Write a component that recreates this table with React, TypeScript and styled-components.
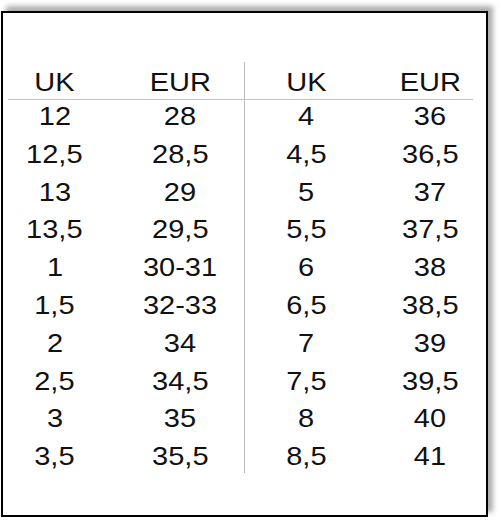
import React from "react";
import styled, { createGlobalStyle } from "styled-components";

const Global = createGlobalStyle`
  html, body { margin: 0; padding: 0; background: #ffffff; }
  body { font-family: "Liberation Sans", Arial, sans-serif; }
`;

const Card = styled.div`
  box-sizing: border-box;
  margin: 11px 0 0 1px;
  width: 487px;
  height: 506px;
  background: #ffffff;
  border: 2px solid #000000;
  box-shadow: 5px -5px 5px rgba(0, 0, 0, 0.32);
  padding: 49px 13px 0 5px;
`;

const Table = styled.div`
  display: flex;
  width: 465px;
  color: #111111;
  font-size: 25px;
`;

const Half = styled.div<{ $cols: string; $divider?: boolean }>`
  display: grid;
  grid-template-columns: ${(p) => p.$cols};
  border-left: ${(p) => (p.$divider ? "1px solid #bdbdbd" : "none")};
`;

const HeadCell = styled.div<{ $pad: number }>`
  line-height: 33px;
  padding-top: 4px;
  padding-left: ${(p) => p.$pad}px;
  text-align: center;
  border-bottom: 1px solid #c4c4c4;
`;

const Cell = styled.div<{ $pad: number; $last?: boolean }>`
  line-height: 33px;
  padding-left: ${(p) => p.$pad}px;
  padding-bottom: ${(p) => (p.$last ? 0 : 4.8)}px;
  text-align: center;
`;

const Text = styled.span`
  display: inline-block;
  transform: scaleX(1.16);
`;

const left: [string, string][] = [
  ["12", "28"],
  ["12,5", "28,5"],
  ["13", "29"],
  ["13,5", "29,5"],
  ["1", "30-31"],
  ["1,5", "32-33"],
  ["2", "34"],
  ["2,5", "34,5"],
  ["3", "35"],
  ["3,5", "35,5"],
];

const right: [string, string][] = [
  ["4", "36"],
  ["4,5", "36,5"],
  ["5", "37"],
  ["5,5", "37,5"],
  ["6", "38"],
  ["6,5", "38,5"],
  ["7", "39"],
  ["7,5", "39,5"],
  ["8", "40"],
  ["8,5", "41"],
];

function SizeHalf({
  rows,
  cols,
  pad,
  divider,
}: {
  rows: [string, string][];
  cols: string;
  pad: number;
  divider?: boolean;
}) {
  return (
    <Half $cols={cols} $divider={divider}>
      <HeadCell $pad={0}>
        <Text>UK</Text>
      </HeadCell>
      <HeadCell $pad={pad}>
        <Text>EUR</Text>
      </HeadCell>
      {rows.map(([uk, eur], i) => (
        <React.Fragment key={uk}>
          <Cell $pad={0} $last={i === rows.length - 1}>
            <Text>{uk}</Text>
          </Cell>
          <Cell $pad={pad} $last={i === rows.length - 1}>
            <Text>{eur}</Text>
          </Cell>
        </React.Fragment>
      ))}
    </Half>
  );
}

export default function App() {
  return (
    <>
      <Global />
      <Card>
        <Table>
          <SizeHalf rows={left} cols="93px 143px" pad={15} />
          <SizeHalf rows={right} cols="122px 106px" pad={20} divider />
        </Table>
      </Card>
    </>
  );
}
